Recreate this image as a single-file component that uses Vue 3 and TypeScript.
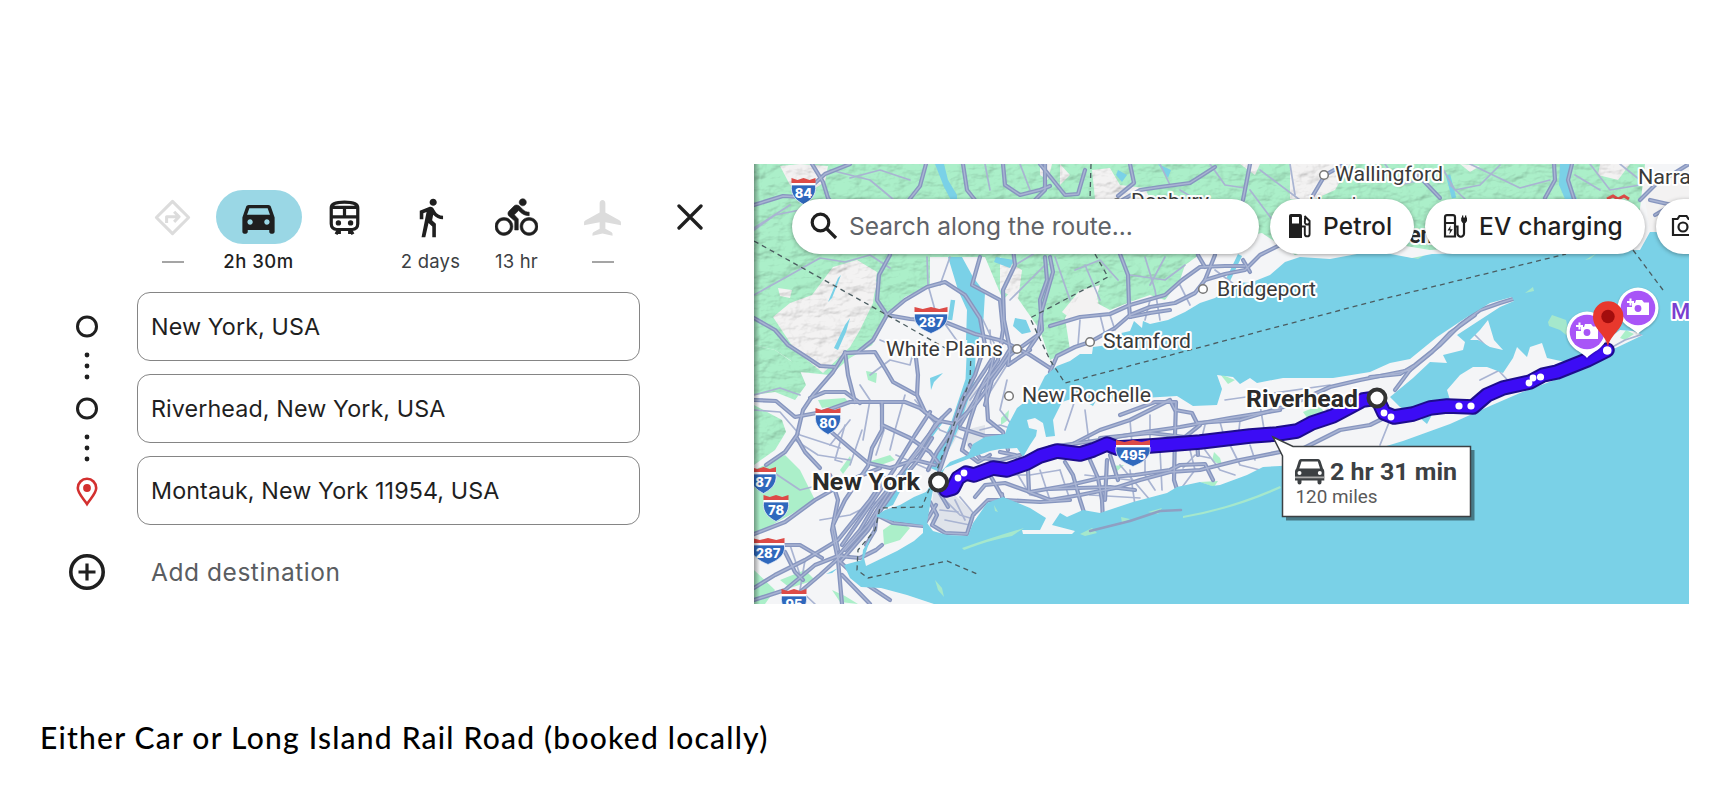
<script setup lang="ts">
import { ref } from 'vue'

interface Mode {
  id: string
  label: string | null
}

interface Stop {
  id: number
  value: string
}

interface Shield {
  x: number
  y: number
  w: number
  text: string
}

interface Place {
  x: number
  y: number
  w: number
  text: string
  dot?: [number, number]
}

const modes: Mode[] = [
  { id: 'best', label: null },
  { id: 'car', label: '2h 30m' },
  { id: 'transit', label: '' },
  { id: 'walk', label: '2 days' },
  { id: 'bike', label: '13 hr' },
  { id: 'flight', label: null }
]
const activeMode = ref('car')

const stops = ref<Stop[]>([
  { id: 1, value: 'New York, USA' },
  { id: 2, value: 'Riverhead, New York, USA' },
  { id: 3, value: 'Montauk, New York 11954, USA' }
])

const shields: Shield[] = [
  { x: 803.5, y: 178, w: 24, text: '84' },
  { x: 931, y: 307, w: 33, text: '287' },
  { x: 828, y: 408, w: 25, text: '80' },
  { x: 763.5, y: 467, w: 25, text: '87' },
  { x: 776, y: 495, w: 25, text: '78' },
  { x: 768, y: 538, w: 33, text: '287' },
  { x: 794, y: 589, w: 25, text: '95' },
  { x: 1133, y: 440, w: 34, text: '495' }
]

const places: Place[] = [
  { x: 886, y: 356, w: 117, text: 'White Plains', dot: [1017, 349] },
  { x: 1022, y: 402, w: 129, text: 'New Rochelle', dot: [1009, 396] },
  { x: 1103, y: 348, w: 88, text: 'Stamford', dot: [1090, 342] },
  { x: 1217, y: 295.5, w: 99, text: 'Bridgeport', dot: [1203, 289] },
  { x: 1131, y: 208, w: 78, text: 'Danbury', dot: [1117, 203] },
  { x: 1335, y: 181, w: 108, text: 'Wallingford', dot: [1324, 175] },
  { x: 1309, y: 212, w: 66, text: 'Hamden' },
  { x: 1638, y: 184, w: 53, text: 'Narra' }
]

const route = '946,490 953,488 958,478 966,473 974,475 993,468 1007,470 1027,463 1040,456 1057,451 1080,454 1093,450 1107,444 1117,448 1150,446 1200,442 1250,436 1277,434 1297,431 1312,423 1333,416 1350,407 1363,400 1377,398 1384,413 1394,417 1413,414 1430,408 1447,406 1473,407 1487,395 1503,388 1530,382 1543,375 1557,372 1587,360 1607,350'

const routeDots: [number, number, number][] = [
  [958, 478, 3.4], [964, 473, 3.4], [1384, 413, 3.4], [1391, 417, 3.4], [1459, 406, 3.6],
  [1471, 406, 3.6], [1529, 383, 3.4], [1533, 378, 3.4], [1540.5, 377, 3.6], [1607, 350.5, 4]
]

// motorways
const highways = [
  '754,205 783,196 800,197 825,174 850,164',
  '812,164 823,182 828,198 838,210',
  '926,164 920,186 905,205 887,225 890,255 879,275 877,300 887,315 910,319 945,322 975,334 1003,341 1030,355 1050,368',
  '887,315 873,340 858,352 845,353 833,372 813,395 803,410 797,435 785,452 766,465',
  '887,315 905,300 927,287 945,282 965,295 980,318 985,345 975,375 962,400 952,430 937,452 928,470',
  '754,400 776,401 795,417 822,412 850,402 880,402 905,402 920,408 935,420 955,424 975,405 990,385',
  '754,318 775,330 788,345 808,358 820,366 835,367',
  '845,352 848,375 855,402',
  '845,353 875,352 886,370 893,382 915,394',
  '915,350 918,375 917,395 925,412 940,422',
  '810,398 825,392 845,392 860,403',
  '797,438 805,452 820,468',
  '829,430 850,448 868,463 890,468 915,460 935,465',
  '882,402 882,430 872,448 868,466 845,500 833,525 838,550',
  '882,425 910,438 930,452 940,465',
  '942,418 925,440 910,460 890,490 868,525 845,550',
  '930,412 915,435 895,468 870,505 842,545',
  '754,534 785,522 815,500 850,480 880,468',
  '830,475 838,500 832,530 838,560 842,604',
  '838,556 860,530 873,508 890,487 905,468 920,450 935,425 950,410',
  '840,562 868,530 882,508 900,482 918,460 932,438',
  '754,600 785,590 815,565 838,556 860,558 876,550 882,545',
  '754,588 775,575 805,560 838,540 870,500 885,478',
  '838,560 860,580 890,600',
  '842,575 870,604', '755,545 800,545 822,558', '842,555 820,575 800,592',
  '785,552 795,572 803,580',
  '877,515 893,523 923,526 930,515 936,505',
  '877,512 875,530 866,545',
  '1003,341 985,370 965,400 955,425 945,455 938,475',
  '980,257 972,285 1000,300 1003,330 998,360 985,380 975,400 960,425',
  '995,350 986,390 988,420 1003,432 1008,450',
  '960,428 985,436 1003,436',
  '1010,349 1008,365 1030,350',
  '1003,164 1005,185 1020,195 1040,190 1050,186',
  '963,164 967,190 975,200', '1040,164 1065,195 1078,194 1085,170',
  '1045,257 1047,280 1040,300 1042,330 1028,350',
  '1045,164 1045,190 1010,225 1015,265 1003,290 1004,320 1010,349 1000,365 980,390 970,420 962,450',
  '1050,257 1053,272 1042,310 1038,335 1010,355 992,380 985,405',
  '1050,372 1057,356 1075,347 1090,342 1115,328 1130,315 1150,307 1175,303 1195,293 1205,280 1225,274 1245,270 1260,255 1290,240',
  '1050,326 1080,317 1110,314 1130,305 1165,295 1182,280 1200,267 1225,266 1245,266',
  '1120,254 1128,275 1129,305 1130,317', '1117,203 1140,190 1160,187 1190,183 1215,167',
  '1130,317 1150,313 1170,310',
  '1130,164 1134,183 1118,196', '1250,164 1243,200', '1312,197 1325,175 1345,164',
  '1205,267 1198,255', '1205,280 1215,255', '1243,260 1250,272',
  '1418,175 1440,198', '1554,164 1555,180 1545,198', '1572,164 1568,180 1574,199',
  '1640,200 1655,185 1689,164', '1650,200 1672,205 1655,215',
  '1002,494 1003,510 1012,505', '930,502 937,515 932,525 945,533 967,534 973,515 988,500 1005,500 1040,502 1070,500',
  '938,490 948,507', '975,497 985,485 1005,483 1030,492 1070,485 1100,478 1135,475 1170,470 1180,465 1205,464 1213,480',
  '990,475 1003,498', '1050,500 1080,495 1115,488 1140,480 1170,472 1200,470 1240,460 1290,450',
  '1050,489 1078,488 1110,487 1135,490', '1065,462 1073,475 1080,500 1090,531', '1090,460 1098,478 1102,500 1103,522 1093,529',
  '1110,455 1118,480', '1107,460 1105,500',
  '1050,455 1065,448 1100,430 1130,420 1170,400 1175,410 1192,413 1197,423 1240,420 1290,405 1330,387 1360,380 1400,372 1410,370',
  '1176,402 1175,435 1174,480 1182,505 1182,512', '1120,415 1155,402 1175,402', '1050,447 1100,440 1145,432 1180,427 1230,418 1280,410',
  '970,445 980,458 1000,460 1020,455', '962,450 978,462 990,455', '1000,452 1015,455 1022,462',
  '1028,470 1029,492 1050,500',
  '1100,438 1150,433 1185,437 1200,425', '1197,440 1198,455',
  '1370,377 1400,374 1415,365 1440,345 1460,325 1480,310 1500,303 1513,299',
  '1395,390 1410,370 1432,352 1450,333 1475,315', '1300,450 1340,430 1370,425 1390,415'
]

// smaller roads
const streets = [
  '754,295 790,275 820,258 845,262 870,255 890,268', '754,230 775,215 800,210', '830,170 870,180 900,205',
  '850,178 880,170 910,180', '927,257 928,285 935,310 960,345', '940,285 950,257', '754,228 790,205',
  '754,410 780,412 800,435 840,448', '770,470 800,490 840,480', '860,385 870,400 863,440', '754,395 780,388 800,395',
  '880,402 884,430 876,455', '905,395 895,430 890,450', '795,440 818,455 850,460', '850,420 830,445',
  '915,400 940,430 965,440', '805,560 800,590 815,604', '790,545 800,575', '896,455 930,470',
  '870,375 890,360 910,365 915,345', '880,340 905,350', '845,425 835,460 842,462', '862,430 850,465',
  '820,520 850,515 880,500', '945,500 960,515 970,518', '955,500 965,520', '940,510 958,512',
  '960,497 975,515', '945,520 970,525', '983,320 995,345 990,380', '990,330 992,370 970,400',
  '1010,360 985,400', '1007,380 1000,410 1012,425', '980,430 1000,425 1010,428', '1015,265 1040,250',
  '1010,300 1030,280 1045,265', '1055,257 1070,300', '1085,265 1100,300', '1075,270 1100,260 1118,280',
  '1145,257 1155,290 1160,320', '1165,257 1150,285', '1130,275 1165,280 1185,265', '1110,315 1115,330',
  '1080,320 1078,345', '1100,315 1105,335', '1150,300 1145,320', '1215,270 1235,285', '1180,285 1190,305',
  '1250,190 1280,230', '1260,170 1300,200', '1180,190 1195,199', '1210,164 1225,185 1245,188', '1160,164 1170,185',
  '1290,164 1295,195', '1385,164 1400,185 1420,180', '1440,164 1455,190 1480,185 1500,165', '1470,164 1520,188 1550,180',
  '1590,164 1610,190 1640,185', '1600,190 1575,175', '1620,164 1640,180', '1450,185 1465,199',
  '1075,400 1065,430', '1085,410 1090,450', '1130,420 1132,445', '1150,415 1150,445', '1205,425 1200,445',
  '1220,422 1225,440', '1240,420 1238,440', '1260,405 1265,435', '1060,470 1070,500', '1130,470 1135,505',
  '1120,465 1150,500', '1145,460 1145,475 1155,490', '1160,450 1162,490', '1190,450 1195,470 1180,490',
  '1205,450 1220,470 1235,475', '1230,445 1240,465 1260,470', '1250,445 1255,460', '1040,470 1050,500',
  '1015,470 1030,495 1060,500', '1005,475 1030,475 1060,470', '1085,475 1130,480', '1090,495 1140,498',
  '1183,468 1195,455 1210,458', '1225,400 1260,395 1330,385', '1300,400 1330,410', '1390,420 1380,445', '1470,330 1490,350 1500,372 1515,388',
  '1480,380 1500,370', '1607,350 1625,340 1643,334', '965,200 975,230', '985,164 990,190', '1020,164 1030,190'
]

const greens = [
  'M754 164H1645L1637 235L1430 250L1400 245L1312 250L1295 255L1262 233L1220 240L1185 265L1180 280L1165 300L1150 295L1130 302L1110 310L1095 302L1100 285L1083 290L1065 318L1070 350L1050 360L1040 330L1012 290L1003 300L985 257H930V285L905 297L890 313L872 345L850 358L830 375L800 372L790 360L775 350L754 345Z',
  'M754 345L775 350L798 366L806 385L795 400L775 392L754 395Z',
  'M754 405L782 420L786 432L775 450L754 465Z',
  'M754 470L785 455L800 470L815 500L790 515L754 535Z',
  'M754 570L775 590L765 604H754Z',
  'M883 530L897 520L910 528L900 540L884 545Z', 'M818 400L845 398L850 404L822 408Z', 'M866 371L877 373L876 383L868 380Z',
  'M840 470L850 456L852 462L843 474Z', 'M780 580L805 570L815 580L790 588Z', 'M868 462L890 455L895 460L875 467Z',
  'M1001 418L1009 410L1008 420L1001 425Z',
  'M1214 452L1220 458L1222 465L1212 461Z', 'M1303 412L1320 405L1325 415L1310 422Z', 'M1111 466L1124 465L1116 472Z',
  'M832 590L845 596L858 604L840 602Z', 'M1400 402L1415 400L1412 407Z',
  'M1220 374L1235 380L1228 384Z', 'M1620 338L1626 330L1634 334L1625 340Z', 'M1200 482L1218 481L1214 487Z'
]

// islands and sand bars off the coast
const islets = [
  'M1548 322L1552 315L1566 320L1570 338L1560 330L1549 326Z', 'M1525 293L1533 287L1534 291Z', 'M1585 260L1597 253L1590 259Z',
  'M1183 516Q1230 508 1280 486L1281 488Q1235 509 1183 518Z', 'M962 548Q990 538 1024 528L1012 536Q990 540 964 550Z',
  'M935 580L942 588L944 597L938 590Z', 'M1080 534L1092 528L1097 533L1085 536Z', 'M1403 256L1430 252L1418 259Z',
  'M1121 517L1130 519L1122 523Z', 'M1148 512L1162 508L1158 514Z', 'M994 505L998 512L995 511Z'
]

// bare patches inside the hills
const patches = [
  'M790 303L812 295L833 267L857 260L877 272L873 303L860 330L850 347L823 373L795 350L773 317Z',
  'M780 166L800 164L828 166L825 182L812 190L790 185Z', 'M778 288L792 290L790 298L780 296Z',
  'M1092 170L1110 168L1120 185L1145 188L1150 199H1095Z', 'M1290 164L1350 164L1335 190L1315 199L1290 199Z',
  'M1080 290L1095 287L1100 310L1070 318L1062 312Z', 'M1060 164L1070 175L1060 185Z', 'M1240 164H1260L1255 175Z',
  'M870 280L878 282L872 300L862 300Z', 'M1600 164L1630 164L1618 180L1598 175Z', 'M1643 185L1660 175L1689 170V232H1650Z',
  'M1460 164L1480 166L1470 172Z', 'M1040 164H1052L1048 180L1040 175Z', 'M1000 257L1022 270L1018 300L1000 290Z'
]
</script>

<template>
  <main class="page">
    <div class="content">
      <section class="panel">
        <div class="modes">
          <button
            v-for="mode in modes"
            :key="mode.id"
            type="button"
            class="mode"
            :class="{ active: mode.id === activeMode, disabled: mode.label === null }"
            @click="activeMode = mode.id"
          >
            <span class="mode-icon">
              <svg v-if="mode.id === 'best'" viewBox="0 0 24 24" fill="none" stroke="currentColor" stroke-width="1.7" stroke-linejoin="round">
                <path d="M12 3 21 12 12 21 3 12Z" />
                <path d="M8.7 15V11.6H14.5M12.9 8.8 15.7 11.6 12.9 14.4" />
              </svg>
              <svg v-else-if="mode.id === 'car'" viewBox="0 0 24 24" fill="currentColor">
                <path d="M18.92 6.01C18.72 5.42 18.16 5 17.5 5h-11c-.66 0-1.21.42-1.42 1.01L3 12v8c0 .55.45 1 1 1h1c.55 0 1-.45 1-1v-1h12v1c0 .55.45 1 1 1h1c.55 0 1-.45 1-1v-8l-2.08-5.99zM7.3 16c-.83 0-1.5-.67-1.5-1.5S6.47 13 7.3 13s1.5.67 1.5 1.5S8.13 16 7.3 16zm9.4 0c-.83 0-1.5-.67-1.5-1.5s.67-1.5 1.5-1.5 1.5.67 1.5 1.5-.67 1.5-1.5 1.5zM5.6 10.5l1.3-3.6h10.2l1.3 3.6H5.6z" />
              </svg>
              <svg v-else-if="mode.id === 'transit'" viewBox="0 0 24 24" fill="none" stroke="currentColor" stroke-width="1.8">
                <path d="M4.6 6.5C4.6 4 7.5 3.4 12 3.4S19.4 4 19.4 6.5V15.5C19.4 17.4 18.2 18.7 16.3 18.7H7.7C5.8 18.7 4.6 17.4 4.6 15.5ZM4.6 6.3H19.4M4.6 11.7H19.400M12 6.3V11.7M8.8 18.5 7.3 21.3M15.2 18.5 16.7 21.3M7.3 20.3H10M16.7 20.3H14" />
                <circle cx="8.6" cy="15" r="1.5" fill="currentColor" stroke="none" />
                <circle cx="15.4" cy="15" r="1.5" fill="currentColor" stroke="none" />
              </svg>
              <svg v-else-if="mode.id === 'walk'" viewBox="0 0 24 24" fill="currentColor">
                <path d="M13.5 5.5c1.1 0 2-.9 2-2s-.9-2-2-2-2 .9-2 2 .9 2 2 2zM9.8 8.9L7 23h2.1l1.8-8 2.1 2v6h2v-7.5l-2.1-2 .6-3C14.8 12 16.8 13 19 13v-2c-1.9 0-3.5-1-4.3-2.4l-1-1.6c-.4-.6-1-1-1.7-1-.3 0-.5.1-.8.1L6 8.3V13h2V9.6l1.8-.7" />
              </svg>
              <svg v-else-if="mode.id === 'bike'" viewBox="0 0 24 24" fill="currentColor" stroke="currentColor" stroke-width=".3">
                <path d="M15.5 5.5c1.1 0 2-.9 2-2s-.9-2-2-2-2 .9-2 2 .9 2 2 2zM5 12c-2.8 0-5 2.2-5 5s2.2 5 5 5 5-2.2 5-5-2.2-5-5-5zm0 8.5c-1.9 0-3.5-1.6-3.5-3.5s1.6-3.5 3.5-3.5 3.5 1.6 3.5 3.5-1.6 3.5-3.5 3.5zm5.8-10l2.4-2.4.8.8c1.3 1.3 3 2.1 5.1 2.1V9c-1.5 0-2.7-.6-3.6-1.5l-1.9-1.9c-.5-.4-1-.6-1.6-.6s-1.1.2-1.4.6L7.8 8.4c-.4.4-.6.9-.6 1.4 0 .6.2 1.1.6 1.4L11 14v5h2v-6.2l-2.2-2.3zM19 12c-2.8 0-5 2.2-5 5s2.2 5 5 5 5-2.2 5-5-2.2-5-5-5zm0 8.5c-1.9 0-3.5-1.6-3.5-3.5s1.6-3.5 3.5-3.5 3.5 1.6 3.5 3.5-1.6 3.5-3.5 3.5z" />
              </svg>
              <svg v-else viewBox="0 0 24 24" fill="currentColor">
                <path d="M12 2.300c-.9 0-1.600.8-1.600 1.700v5.200L2.600 13.600c-.5.300-.9.700-.9 1.300v1.400l8.700-1.700v3.700l-3.300 1.800c-.5.300-.7.700-.7 1.200v.9L12 20.900l5.600 1.300v-.9c0-.5-.2-.9-.7-1.200l-3.300-1.800v-3.700l8.700 1.700v-1.400c0-.6-.4-1-.9-1.300l-7.800-4.400V4c0-.9-.7-1.700-1.600-1.700z" />
              </svg>
            </span>
            <span v-if="mode.label !== null" class="mode-label">{{ mode.label }}</span>
            <span v-else class="mode-dash"></span>
          </button>
          <button type="button" class="close" aria-label="Close">
            <svg viewBox="0 0 26 26"><path d="M2 2 24 24M24 2 2 24" /></svg>
          </button>
        </div>

        <div class="stops">
          <svg class="rail" viewBox="0 0 36 300">
            <g fill="none" stroke="#1f1f1f">
              <circle cx="18" cy="34.5" r="9.5" stroke-width="3" />
              <circle cx="18" cy="116.5" r="9.5" stroke-width="3" />
              <circle cx="18" cy="280" r="16.2" stroke-width="3.6" />
              <path d="M18 271.5V288.5M9.5 280H26.5" stroke-width="3.2" />
            </g>
            <circle v-for="y in [63, 74, 85, 145, 156, 167]" :key="y" cx="18" :cy="y" r="2.4" fill="#1f1f1f" />
            <g stroke="#d3302f">
              <path d="M18 212C14.5 206.500 8.800 201.500 8.800 196A9.200 9.200 0 0 1 27.200 196C27.200 201.500 21.500 206.500 18 212Z" fill="none" stroke-width="2.6" />
              <circle cx="18" cy="196" r="3.9" fill="#d3302f" stroke="none" />
            </g>
          </svg>
          <div class="fields">
            <div v-for="stop in stops" :key="stop.id" class="field">{{ stop.value }}</div>
            <div class="add">Add destination</div>
          </div>
        </div>
      </section>

      <section class="map">
        <svg class="map-canvas" viewBox="754 164 935 440">
          <defs>
            <filter id="relief" x="0" y="0" width="100%" height="100%">
              <feTurbulence type="fractalNoise" baseFrequency="0.05 0.09" numOctaves="4" seed="7" />
              <feDiffuseLighting surfaceScale="5" diffuseConstant="1.15" lighting-color="#ffffff">
                <feDistantLight azimuth="225" elevation="55" />
              </feDiffuseLighting>
            </filter>
            <clipPath id="hills"><path :d="greens[0] + greens[1] + greens[2]" /></clipPath>
            <clipPath id="land">
              <path d="M754 164H1689V232L1650 232L1640 250L1560 252L1432 254L1412 258L1380 252L1357 254L1330 259L1300 257L1285 262L1270 275L1250 283L1238 282L1215 298L1200 303L1185 312L1168 320L1150 324L1143 321L1142 328L1134 321L1130 331L1117 334L1108 345L1093 347L1092 354L1080 354L1070 361L1057 366L1045 376L1037 392L1030 398L1017 408L1008 425L1005 434L985 437L973 444L968 455L950 462L938 475L932 484L926 492L914 497L900 505L885 510L877 515L872 535L863 550L862 560L844 565L850 578L861 587L881 588L907 595L934 604H754Z" />
              <path d="M875 516L893 521L923 525L923 533L914 541L897 551L866 566L864 558L870 540Z" />
              <path d="M933 490L945 468L973 457L990 451L1000 449L1017 448L1023 457L1030 445L1036 436L1037 430L1029 428L1027 420L1035 418L1043 423L1046 437L1055 436L1053 420L1062 402L1077 397L1093 406L1100 394L1113 400L1127 393L1143 398L1177 396L1193 406L1217 405L1222 389L1217 375L1233 377L1240 384L1250 378L1257 383L1283 378L1333 378L1370 372L1390 363L1410 359L1437 337L1467 317L1490 303L1512 297L1514 301L1500 307L1480 320L1457 335L1465 342L1463 350L1443 355L1447 363L1430 362L1413 378L1390 397L1400 407L1420 418L1427 424L1433 413L1450 400L1447 390L1460 375L1473 367L1487 367L1503 373L1513 358L1517 347L1527 357L1530 347L1542 343L1547 358L1570 363L1587 353L1603 343L1620 330L1633 331L1643 335L1620 346L1600 355L1560 378L1520 393L1490 406L1450 424L1403 441L1340 460L1280 466L1263 467L1247 475L1220 485L1212 486L1200 482L1177 487L1167 493L1133 502L1100 513L1083 510L1067 517L1060 513L1052 525L1075 531L1072 534L1023 534L1022 530L1040 530L1046 518L1030 508L1018 503L1003 497L987 503L973 523L968 536L947 535L933 531L927 523L931 500Z" />
              <path d="M1470 340L1480 330L1488 320L1494 340L1503 350L1490 347L1478 340Z" />
            </clipPath>
          </defs>

          <rect x="754" y="164" width="935" height="440" fill="#7ad1e7" />
          <path v-for="d in islets" :key="d" :d="d" fill="#a5e8cc" />
          <g clip-path="url(#land)">
            <rect x="754" y="164" width="935" height="440" fill="#f4f5f7" />
            <path v-for="d in greens" :key="d" :d="d" fill="#abefc9" />
            <path v-for="d in patches" :key="d" :d="d" fill="#f3f2f2" />
            <g clip-path="url(#hills)" class="relief">
              <rect x="754" y="164" width="935" height="440" filter="url(#relief)" />
            </g>
            <path d="M935 478L960 500L972 512L968 532L945 532L930 520ZM965 430L985 425L985 445L968 450ZM968 385L978 385L955 440L938 468Z" fill="#dfe3ea" />
            <path d="M1008 505L1020 508L1015 518L1005 512Z" fill="#d2d7ef" />
            <g fill="#7ad1e7">
              <path d="M935 164L944 164L948 180L957 195V202L952 202L944 187ZM948 257L962 257L973 277L985 293L983 327L978 340L966 340L967 310L958 290Z" />
              <path d="M850 318L846 332L838 350L834 348L845 325ZM841 275L832 298L828 302L838 278ZM1015 318L1026 320L1031 332L1022 334L1013 326ZM1118 170L1127 175L1122 182L1116 175ZM1158 164L1171 170L1168 178ZM1560 164H1572L1569 180L1577 199H1565L1559 185Z" />
              <path d="M930 378L943 373L934 382L931 390ZM996 257L1014 260L1010 268L994 262ZM894 490L904 484L893 505L878 511L880 505ZM826 574L838 568L832 573Z" />
            </g>
            <path d="M972 335L970 380L955 425L935 470" class="river" />
            <path d="M942 420L925 443L906 466L902 485M953 300L950 320M1240 255L1228 280M1448 175L1454 198" class="creek" />
            <polyline v-for="p in streets" :key="p" :points="p" class="street" />
            <polyline v-for="p in highways" :key="p" :points="p" class="highway" />
            <polyline v-for="p in highways" :key="p + 'c'" :points="p" class="highway-core" />
          </g>
          <path d="M1090 531L1130 521L1160 511L1181 510" class="coast-road" />

          <g class="borders">
            <path d="M754 241L887 315L945 348M1091 164L1090 199M1095 254L1108 277L1030 318L1050 360L1065 383L1375 301L1566 254M1633 250L1663 290" />
            <path d="M971 352L970 380L952 430L935 475L922 507L880 508L875 530L858 550L857 570L868 578L947 561L977 574" />
          </g>

          <path d="M1607 199L1613 196L1618 199L1624 196L1629 199" fill="none" stroke="#dd4b47" stroke-width="3" />

          <polyline :points="route" class="route-edge" />
          <polyline :points="route" class="route" />
          <circle v-for="d in routeDots" :key="d[0]" :cx="d[0]" :cy="d[1]" :r="d[2]" fill="#fff" />

          <g v-for="s in shields" :key="s.x" :transform="`translate(${s.x} ${s.y})`">
            <path :d="`M${-s.w / 2} 7H${s.w / 2}C${s.w / 2 + 1.5} 18 ${s.w / 4} 23 0 26.5C${-s.w / 4} 23 ${-s.w / 2 - 1.5} 18 ${-s.w / 2} 7Z`" fill="#2f68bd" stroke="#e9eef8" stroke-width=".8" />
            <path :d="`M${-s.w / 2} 0L${-s.w / 4} 2L0 0L${s.w / 4} 2L${s.w / 2} 0V5H${-s.w / 2}Z`" fill="#dd4b47" />
            <path :d="`M${-s.w / 2} 5H${s.w / 2}V7H${-s.w / 2}Z`" fill="#fff" />
            <text y="19.500" text-anchor="middle" class="shield-text">{{ s.text }}</text>
          </g>

          <g v-for="p in places" :key="p.text">
            <circle v-if="p.dot" :cx="p.dot[0]" :cy="p.dot[1]" r="4.3" fill="#fff" stroke="#777" stroke-width="1.5" />
            <text :x="p.x" :y="p.y" :textLength="p.w" lengthAdjust="spacingAndGlyphs" class="place">{{ p.text }}</text>
          </g>
          <text x="1321" y="243" textLength="112" lengthAdjust="spacingAndGlyphs" class="place city">New Haven</text>
          <text x="812" y="490" textLength="108" lengthAdjust="spacingAndGlyphs" class="place city">New York</text>
          <text x="1246" y="407" textLength="112" lengthAdjust="spacingAndGlyphs" class="place city">Riverhead</text>
          <circle cx="938.5" cy="482" r="8.5" class="endpoint" />
          <circle cx="1377" cy="398" r="8.5" class="endpoint" />

          <g v-for="pin in [[1587, 332], [1638, 308]]" :key="pin[0]" :transform="`translate(${pin[0]} ${pin[1]})`">
            <path d="M0 26C-4 21 -9 20 -14 15A20.500 20.500 0 1 1 14 15C9 20 4 21 0 26Z" fill="#fff" class="pin-shadow" />
            <circle r="17.3" fill="#a855f7" />
            <path d="M-2-8H4L6-5.500H11V7H-11V-1H-6V-5H-3Z" fill="#fff" />
            <circle cx="0" cy="0.5" r="3.4" fill="#a855f7" />
            <path d="M-7.500-9.500V-2.500M-11-6H-4" stroke="#fff" stroke-width="2" />
          </g>
          <path d="M1608 347C1606 334 1593 330 1593 316.500A15.200 15.200 0 0 1 1623.400 316.500C1623.400 330 1610 334 1608 347Z" fill="#e8382d" />
          <circle cx="1608" cy="316.5" r="6.7" fill="#a30d0d" />
          <circle cx="1607.5" cy="350.5" r="4" fill="#fff" />
          <text x="1671" y="319" class="place poi">M</text>

          <path d="M1286 450H1474.500V520.500H1286Z" fill="#000" opacity=".42" />
          <path d="M1273 437L1293 446.500H1470.500V516.500H1282.500V456Z" fill="#fff" stroke="#3c4043" stroke-width="1.5" />
          <g transform="translate(1295 459)" fill="#3c4043">
            <path fill-rule="evenodd" d="M6 0H23C24.500 0 25.200 1 25.700 2.500L28 9.500C29 10.500 29.300 11.500 29.300 13V21.500H26.500V23.500A2 2 0 0 1 22.500 23.500V21.500H6.500V23.500A2 2 0 0 1 2.500 23.500V21.500H0V13C0 11.500 .5 10.500 1.300 9.500L3.500 2.500C4 1 4.700 0 6 0ZM6.500 2.500 4.300 9.500H25L22.800 2.500Z" />
            <circle cx="4.5" cy="14" r="2" fill="#fff" />
            <circle cx="24.8" cy="14" r="2" fill="#fff" />
            <path d="M0 17.500H29.300V19.300H0Z" fill="#aaa" />
          </g>
          <text x="1330" y="480" textLength="127" lengthAdjust="spacingAndGlyphs" class="duration">2 hr 31 min</text>
          <text x="1295.5" y="502.5" textLength="82" lengthAdjust="spacingAndGlyphs" class="distance">120 miles</text>
        </svg>

        <div class="toolbar">
          <div class="search">
            <svg viewBox="0 0 28 28" fill="none" stroke="#1f1f1f" stroke-width="3.2">
              <circle cx="10.5" cy="10.5" r="8.3" />
              <path d="M16.5 16.5 26 26" />
            </svg>
            <span>Search along the route...</span>
          </div>
          <button type="button" class="chip petrol">
            <svg viewBox="0 0 24 24">
              <path fill="#1f1f1f" fill-rule="evenodd" d="M3 0H12A2 2 0 0 1 14 2V24H1V2A2 2 0 0 1 3 0ZM4 3V9.500H11V3Z" />
              <path fill="none" stroke="#1f1f1f" stroke-width="1.9" d="M14 12.500H16.800V20A2.400 2.400 0 0 0 21.600 20V7L16.500 2M17 3.500V7A2.300 2.300 0 0 0 21.600 9" />
            </svg>
            <span>Petrol</span>
          </button>
          <button type="button" class="chip ev">
            <svg viewBox="0 0 24 24" fill="none" stroke="#1f1f1f" stroke-width="2.2">
              <path d="M2 22.500V3A2 2 0 0 1 4 1.200H10A2 2 0 0 1 12 3V22.500ZM2 9H12M12 12.500H14.500V19.500A2.300 2.300 0 0 0 21 19.500V8" />
              <path d="M7.600 11.500 4.500 16.500H7L6.300 20.500 9.800 15.300H7.300Z" fill="#1f1f1f" stroke="none" />
              <path d="M18.200 3.500H24V7L22.500 9H19.700L18.200 7ZM19 1.500H20.300V4H19ZM22 1.500H23.300V4H22Z" fill="#1f1f1f" stroke="none" />
            </svg>
            <span>EV charging</span>
          </button>
          <button type="button" class="chip sights" aria-label="Attractions">
            <svg viewBox="0 0 24 24" fill="none" stroke="#1f1f1f" stroke-width="2.2">
              <path d="M2 5H6.500L8.500 2H15.500L17.500 5H22V21H2Z" />
              <circle cx="12" cy="13" r="4.5" />
            </svg>
          </button>
        </div>
      </section>
    </div>
    <p class="caption">Either Car or Long Island Rail Road (booked locally)</p>
  </main>
</template>

<style>
body {
  background: #fff;
}
</style>

<style scoped>
.page {
  width: 1713px;
  height: 790px;
  box-sizing: border-box;
  padding-top: 164px;
  overflow: hidden;
  background: #fff;
  font-family: Inter, Roboto, sans-serif;
  color: #1f1f1f;
}

.content {
  display: flex;
  height: 440px;
}

.panel {
  width: 754px;
  flex: none;
}

button {
  border: 0;
  padding: 0;
  background: none;
  font: inherit;
  color: inherit;
}

.modes {
  display: flex;
  padding: 26px 0 0 129.5px;
  height: 102px;
  box-sizing: border-box;
}

.mode {
  width: 86px;
  flex: none;
  display: flex;
  flex-direction: column;
  align-items: center;
}

.mode-icon {
  width: 86px;
  height: 54px;
  flex: none;
  border-radius: 27px;
  display: flex;
  align-items: center;
  justify-content: center;
}

.mode-icon svg {
  width: 43px;
  height: 43px;
}

.active .mode-icon {
  background: #9ad7e5;
}

.disabled .mode-icon {
  color: #dcdcdc;
}

.mode-label {
  margin-top: 6px;
  font-size: 18.5px;
  line-height: 22px;
  letter-spacing: 0.2px;
  color: #3c4043;
  white-space: nowrap;
}

.active .mode-label {
  color: #1f1f1f;
  font-weight: 500;
  letter-spacing: 0.5px;
}

.mode-dash {
  width: 22px;
  height: 1.5px;
  flex: none;
  margin-top: 17px;
  background: #a5a5a5;
}

.close {
  width: 26px;
  height: 26px;
  margin: 14px 0 0 31px;
}

.close svg {
  display: block;
  width: 26px;
  height: 26px;
  fill: none;
  stroke: #1f1f1f;
  stroke-width: 3.3;
  stroke-linecap: round;
}

.stops {
  display: flex;
  padding: 26px 0 0 68.5px;
}

.rail {
  width: 36px;
  height: 300px;
  flex: none;
}

.fields {
  margin-left: 32px;
  width: 503px;
  display: flex;
  flex-direction: column;
  gap: 13.5px;
}

.field {
  height: 68.5px;
  box-sizing: border-box;
  border: 1.5px solid #858585;
  border-radius: 13px;
  padding-left: 13.5px;
  display: flex;
  align-items: center;
  font-size: 23.3px;
  letter-spacing: 0.1px;
  white-space: nowrap;
}

.add {
  padding: 20px 0 0 14.5px;
  font-size: 24.5px;
  line-height: 28px;
  letter-spacing: 0.55px;
  color: #5a5d61;
}

.map {
  position: relative;
  width: 935px;
  height: 440px;
  overflow: hidden;
}

.map::after {
  content: '';
  position: absolute;
  inset: 0 auto 0 0;
  width: 6px;
  background: linear-gradient(to right, rgba(0, 0, 0, 0.35), transparent);
}

.map-canvas {
  display: block;
  width: 935px;
  height: 440px;
}

.relief {
  mix-blend-mode: multiply;
  opacity: 0.3;
}

.river {
  fill: none;
  stroke: #7ad1e7;
  stroke-width: 9;
}

.creek {
  fill: none;
  stroke: #7ad1e7;
  stroke-width: 4.5;
}

.street,
.coast-road,
.highway,
.highway-core {
  fill: none;
  stroke-linejoin: round;
  stroke-linecap: round;
}

.street {
  stroke: #a9b4d2;
  stroke-width: 1.7;
}

.coast-road {
  stroke: #8f9fc2;
  stroke-width: 2.5;
}

.highway {
  stroke: #8796bf;
  stroke-width: 4.2;
}

.highway-core {
  stroke: #a9b4d3;
  stroke-width: 1.4;
}

.borders path {
  fill: none;
  stroke: #4b5c60;
  stroke-width: 1.3;
  stroke-dasharray: 5 4;
}

.shield-text {
  font: 800 13px Inter, sans-serif;
  fill: #fff;
}

.place {
  font: 400 20.5px Roboto, sans-serif;
  fill: #3a3a3a;
  stroke: #fff;
  stroke-width: 4px;
  stroke-linejoin: round;
  paint-order: stroke;
}

.city {
  font-weight: 700;
  font-size: 23.5px;
  fill: #2a2a2a;
}

.poi {
  font-weight: 500;
  font-size: 22px;
  fill: #7a3fd0;
}

.route-edge,
.route {
  fill: none;
  stroke-linejoin: round;
  stroke-linecap: round;
}

.route-edge {
  stroke: #1d0c8c;
  stroke-width: 15.5;
}

.route {
  stroke: #3c0cf5;
  stroke-width: 11.5;
}

.endpoint {
  fill: #fff;
  stroke: #333;
  stroke-width: 4;
}

.pin-shadow {
  filter: drop-shadow(0 1px 1px rgba(0, 0, 0, 0.3));
}

.duration {
  font: 700 24px Roboto, sans-serif;
  fill: #3c4043;
}

.distance {
  font: 400 19px Roboto, sans-serif;
  fill: #5a5a5a;
}

.toolbar {
  position: absolute;
  left: 38px;
  top: 35px;
  display: flex;
  gap: 11px;
}

.search,
.chip {
  flex: none;
  height: 55px;
  border-radius: 28px;
  background: #fff;
  box-shadow: 0 1px 4px rgba(0, 0, 0, 0.35);
  display: flex;
  align-items: center;
  box-sizing: border-box;
  white-space: nowrap;
}

.search {
  width: 467px;
  padding: 0 0 2px 18px;
  font-size: 24.5px;
  color: #5f6368;
}

.search svg {
  width: 28px;
  height: 28px;
  margin-right: 11px;
}

.chip {
  padding-bottom: 2px;
  font-size: 24.5px;
  font-weight: 500;
  letter-spacing: 0.2px;
}

.chip svg {
  width: 24px;
  height: 24px;
}

.petrol {
  width: 144px;
  padding-left: 18px;
}

.petrol span {
  margin-left: 11px;
}

.ev {
  width: 220px;
  padding-left: 18px;
}

.ev span {
  margin-left: 12px;
}

.sights {
  width: 200px;
  padding-left: 15px;
}

.caption {
  margin: 114.5px 0 0 40px;
  font-family: Lato, sans-serif;
  font-weight: 500;
  font-size: 30px;
  line-height: 36px;
  letter-spacing: 1.22px;
  color: #000;
}
</style>
